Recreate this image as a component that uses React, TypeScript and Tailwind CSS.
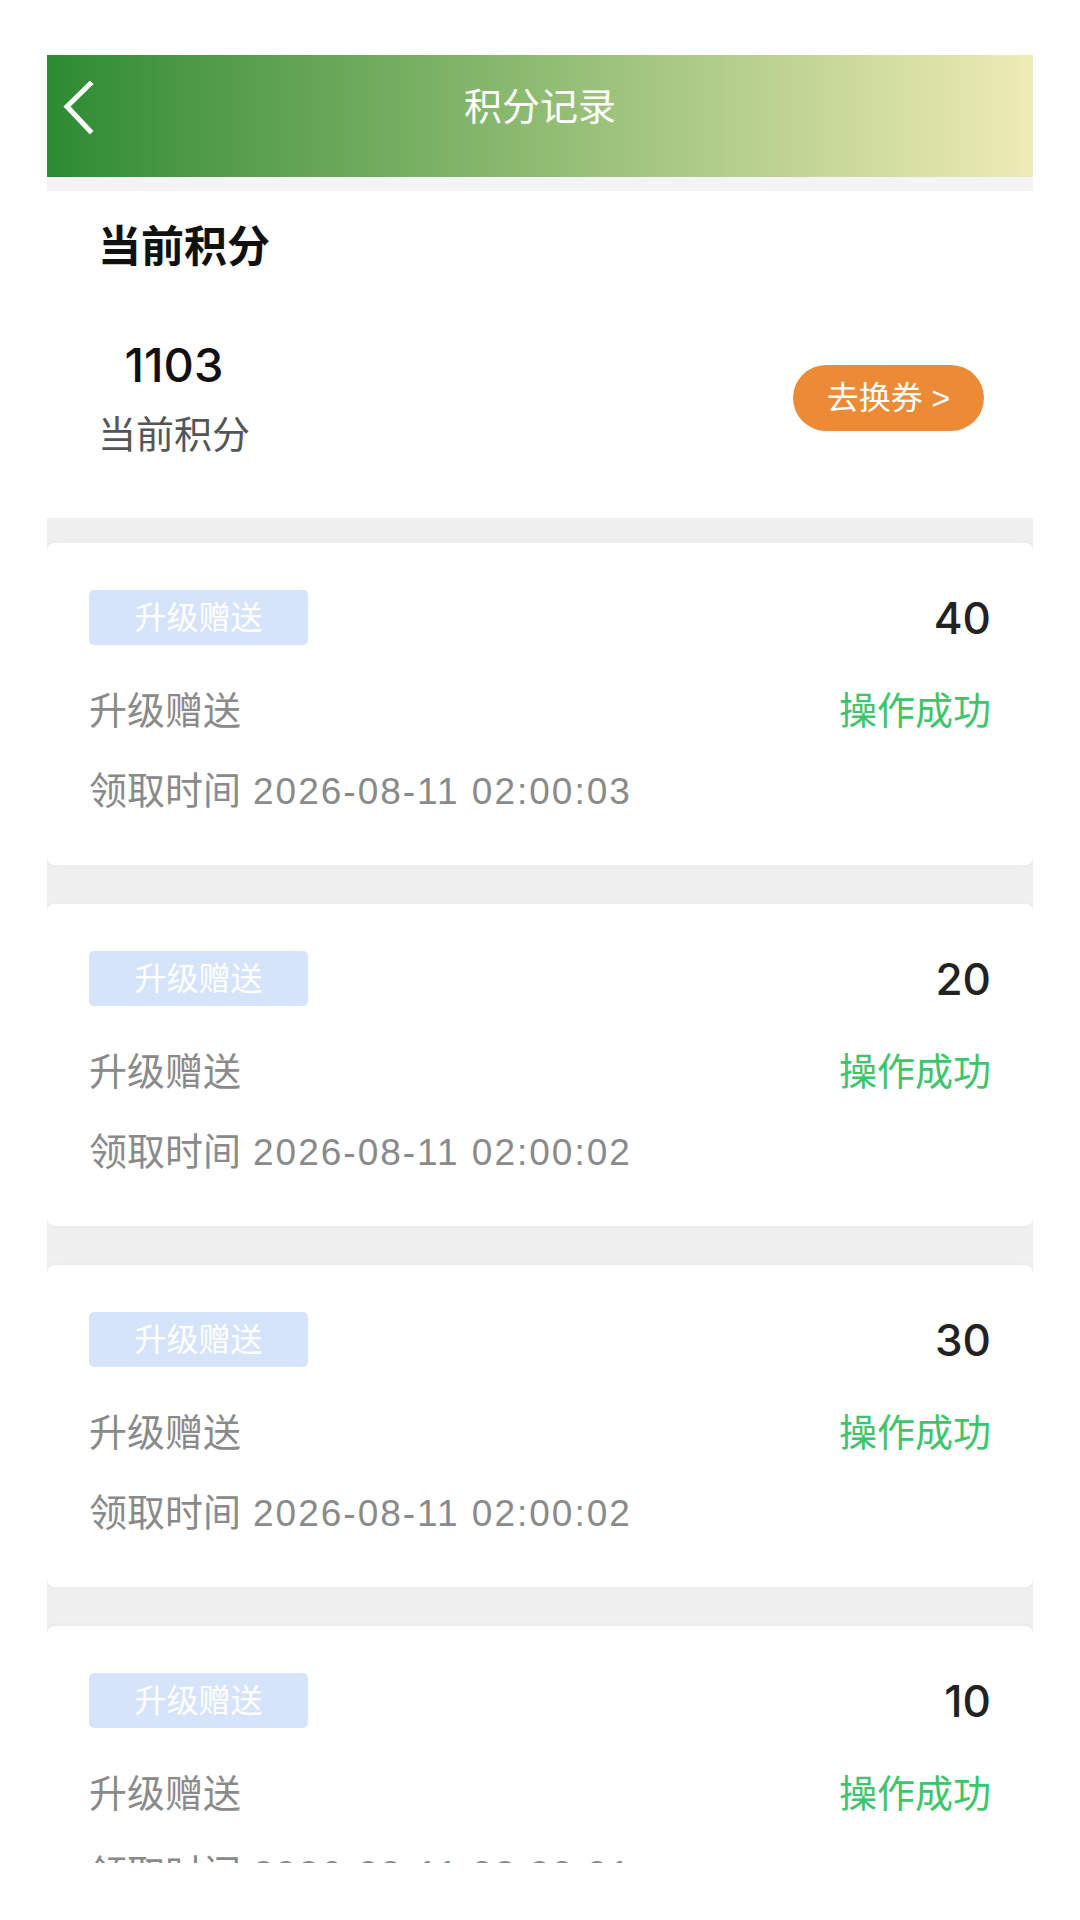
import React from "react"

const font = { fontFamily: '"Liberation Sans", "Noto Sans CJK SC", sans-serif' }
const numFont = { fontFamily: 'Inter, "Liberation Sans", sans-serif' }

const records = [
  { points: 40, time: "2026-08-11 02:00:03" },
  { points: 20, time: "2026-08-11 02:00:02" },
  { points: 30, time: "2026-08-11 02:00:02" },
  { points: 10, time: "2026-08-11 02:00:01" },
]

function BackIcon() {
  return (
    <svg width="34" height="54" viewBox="0 0 34 54" fill="none">
      <path d="M29 3 L6 25.5 L29 50" stroke="white" strokeWidth="5" strokeLinecap="square" strokeLinejoin="miter" />
    </svg>
  )
}

function RecordCard({ points, time }: { points: number; time: string }) {
  return (
    <div className="h-[322px] shrink-0 rounded-lg bg-white px-[42px] pt-[47px] shadow-[0_0_10px_rgba(0,0,0,0.04)]">
      {/* Tag + points */}
      <div className="flex h-[55px] items-center justify-between">
        <div className="flex h-[55px] w-[219px] items-center justify-center rounded-[5px] bg-[#d6e4fb] text-[32px] leading-none text-white">
          升级赠送
        </div>
        <div className="text-[44px] font-medium leading-none text-[#222]" style={numFont}>
          {points}
        </div>
      </div>

      {/* Type + status */}
      <div className="mt-[46px] flex h-[40px] items-center justify-between text-[38px] leading-none">
        <span className="text-[#8a8a8a]">升级赠送</span>
        <span className="text-[#3cc56b]">操作成功</span>
      </div>

      {/* Time */}
      <div className="mt-[40px] flex h-[40px] items-center text-[38px] leading-none text-[#8a8a8a]">
        <span>领取时间</span>
        <span className="ml-[12px] text-[37px] tracking-[2px]">{time}</span>
      </div>
    </div>
  )
}

export default function App() {
  return (
    <div className="h-[1920px] w-full bg-white px-[47px] pt-[55px]" style={font}>
      <div className="flex h-[1808px] flex-col overflow-hidden">
        {/* Header */}
        <div className="relative flex h-[122px] shrink-0 items-center justify-center bg-gradient-to-r from-[#2a8b33] via-[#8fbc72] to-[#efebb6] pb-[18px]">
          <button className="absolute left-[14px] top-[26px]">
            <BackIcon />
          </button>
          <h1 className="text-[38px] font-normal leading-none text-white">积分记录</h1>
        </div>

        <div className="h-[14px] shrink-0 bg-[#f4f4f4]" />

        {/* Current points */}
        <div className="flex h-[327px] shrink-0 flex-col bg-white pl-[51px] pr-[49px]">
          <div className="mt-[35px] text-[43px] font-bold leading-none text-[#111]">当前积分</div>
          <div className="mt-[72px] flex items-center justify-between">
            <div className="flex flex-col items-center">
              <div className="text-[47px] font-medium leading-none text-[#111]" style={numFont}>
                1103
              </div>
              <div className="mt-[28px] text-[38px] leading-none text-[#555]">当前积分</div>
            </div>
            <button className="flex h-[66px] w-[191px] items-center justify-center rounded-full bg-[#ed8a35] text-[32px] leading-none text-white">
              去换券 &gt;
            </button>
          </div>
        </div>

        {/* Records */}
        <div className="flex flex-1 flex-col gap-[39px] bg-[#f0f0f0] pt-[25px]">
          {records.map((r, i) => (
            <RecordCard key={i} points={r.points} time={r.time} />
          ))}
        </div>
      </div>
    </div>
  )
}
